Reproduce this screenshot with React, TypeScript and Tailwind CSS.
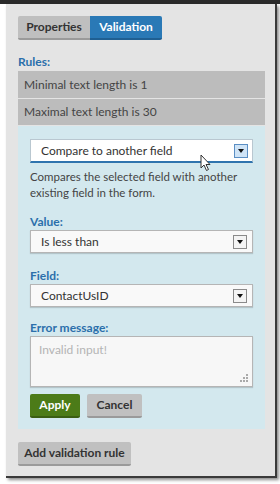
const font = { fontFamily: "Lato, 'Open Sans', sans-serif" };

const DropBtn = ({ active }: { active?: boolean }) => (
  <div
    className={`w-[14px] h-[14px] flex items-center justify-center border ${
      active ? "border-[#5b8fc4] bg-[#cfe4f7]" : "border-[#8a8a8a] bg-[#f4f4f4]"
    }`}
  >
    <div className="w-0 h-0 border-l-[3px] border-r-[3px] border-t-[4px] border-l-transparent border-r-transparent border-t-[#111]" />
  </div>
);

const Select = ({ value }: { value: string }) => (
  <div className="h-[23px] bg-[#f9f9f9] border border-[#b5b5b5] shadow-[0_1px_1px_rgba(0,0,0,0.15)] flex items-center justify-between pl-[10px] pr-[5px] text-[12px] text-[#333]">
    <span>{value}</span>
    <DropBtn />
  </div>
);

const Label = ({ children }: { children: string }) => (
  <div className="text-[12px] font-bold text-[#2b6fab] leading-[14px]">{children}</div>
);

export default function App() {
  return (
    <div className="w-[280px] h-[484px] bg-white border-t-4 border-[#2a2a2a]" style={font}>
      <div className="ml-[6px] w-[271px] h-[474px] bg-[#e4e4e4] border-r-2 border-b-2 border-[#3a3a3a] shadow-[2px_2px_3px_rgba(0,0,0,0.45)] pt-[12px] px-[12px]">
        {/* tabs */}
        <div className="flex">
          <div className="w-[72px] h-[24px] flex items-center justify-center bg-[#bfbfbf] border-b-2 border-[#9a9a9a] rounded-l-[2px] text-[12px] font-bold text-[#333]">
            Properties
          </div>
          <div className="w-[72px] h-[24px] flex items-center justify-center bg-[#2a79b6] border-b-2 border-[#1f5f92] rounded-r-[2px] text-[12px] font-bold text-white">
            Validation
          </div>
        </div>

        <div className="mt-[15px]">
          <Label>Rules:</Label>
        </div>

        <div className="mt-[2px] w-[247px] flex flex-col gap-[1px]">
          <div className="h-[27px] bg-[#bcbcbc] flex items-center pl-[6px] text-[12px] text-[#444]">Minimal text length is 1</div>
          <div className="h-[26px] bg-[#bcbcbc] flex items-center pl-[6px] text-[12px] text-[#444]">Maximal text length is 30</div>

          <div className="bg-[#d3e8ee] px-[12px] pt-[13px] pb-[11px] relative">
            <div className="h-[24px] bg-white border border-[#b9c7d0] border-b-2 border-b-[#2f74ae] flex items-center justify-between pl-[10px] pr-[4px] text-[12px] text-[#333]">
              <span>Compare to another field</span>
              <DropBtn active />
            </div>
            {/* cursor */}
            <svg className="absolute left-[182px] top-[28px]" width="12" height="18" viewBox="0 0 12 18">
              <path d="M1 1 L1 14 L4 11 L6.5 16.5 L8.5 15.5 L6 10.5 L10 10.5 Z" fill="#fff" stroke="#333" strokeWidth="1" strokeLinejoin="round" />
            </svg>

            <p className="mt-[6px] text-[11.5px] leading-[16px] text-[#444]">
              Compares the selected field with another existing field in the form.
            </p>

            <div className="mt-[14px]"><Label>Value:</Label></div>
            <div className="mt-[1px]"><Select value="Is less than" /></div>

            <div className="mt-[16px]"><Label>Field:</Label></div>
            <div className="mt-[1px]"><Select value="ContactUsID" /></div>

            <div className="mt-[14px]"><Label>Error message:</Label></div>
            <div className="mt-[1px] h-[51px] bg-[#f7f7f7] border border-[#b5b5b5] shadow-[0_1px_1px_rgba(0,0,0,0.15)] relative px-[8px] pt-[4px] text-[12px] text-[#b4b4b4]">
              Invalid input!
              <svg className="absolute right-[4px] bottom-[4px]" width="8" height="8" viewBox="0 0 8 8" fill="#aaa">
                <rect x="6" y="0" width="2" height="2" />
                <rect x="3" y="3" width="2" height="2" />
                <rect x="6" y="3" width="2" height="2" />
                <rect x="0" y="6" width="2" height="2" />
                <rect x="3" y="6" width="2" height="2" />
                <rect x="6" y="6" width="2" height="2" />
              </svg>
            </div>

            <div className="mt-[7px] flex gap-[7px]">
              <div className="w-[50px] h-[24px] bg-[#4c7b18] border-b-2 border-[#3a5e12] rounded-[2px] flex items-center justify-center text-[12px] font-bold text-white">
                Apply
              </div>
              <div className="w-[55px] h-[24px] bg-[#c0c0c0] border-b-2 border-[#9a9a9a] rounded-[2px] flex items-center justify-center text-[12px] font-bold text-[#333]">
                Cancel
              </div>
            </div>
          </div>
        </div>

        <div className="mt-[13px] w-[113px] h-[24px] bg-[#c0c0c0] border-b-2 border-[#9a9a9a] rounded-[2px] flex items-center justify-center text-[12px] font-bold text-[#333]">
          Add validation rule
        </div>
      </div>
    </div>
  );
}
